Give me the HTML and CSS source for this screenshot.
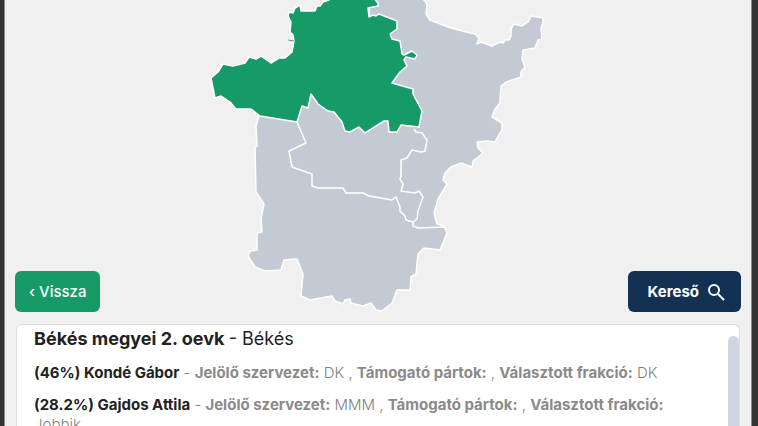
FILE: index.html
```
<!DOCTYPE html>
<html lang="hu">
<head>
    <meta charset="UTF-8">
    <meta name="viewport" content="width=device-width, initial-scale=1.0">
    <link rel="stylesheet" href="styles.css">
    <title>Békés megye</title>
</head>
<body>
    <main class="page">
        <section class="stage">
            <button type="button" class="btn btn-back">‹ Vissza</button>

            <svg class="map" viewBox="203 0 350 312" role="img" aria-label="Békés megye választókerületei">
                <path class="district" d="M420 -5L427 4L426 14L430 20L448 27L462 31L475 34L479 38L477 44L481 42L492 46L500 42L503 43L505 40L509 40L511 36L511 29L514 24L522 26L528 22L531 16L543 18L543 23L541 28L542 39L538 40L535 48L523 50L522 59L525 67L521 72L521 77L506 82L501 86L500 103L495 109L492 117L502 123L502 130L495 142L487 141L477 142L478 148L483 153L473 161L472 167L461 163L451 167L445 173L443 180L447 184L438 199L434 213L437 224L444 226L447 233L440 250L424 248L418 254L416 274L411 277L410 290L397 290L392 303L382 311L376 310L371 303L363 306L351 303L350 299L345 300L343 304L335 301L332 296L310 300L301 296L303 274L297 259L284 260L281 270L265 271L255 267L248 256L250 251L257 250L257 233L262 232L261 218L264 204L256 192L255 147L257 146L256 126L259 116L300 90L370 30L368 -8Z"/>
                <path class="border" d="M297 122L306 143L289 151L292 167L312 174L312 186L318 188L343 188L346 193L363 193L369 196L392 200L396 197L400 207L400 211L405 216L406 220L413 222L413 226L418 228L445 227"/>
                <path class="border" d="M414 129L416 132L422 133L427 140L425 151L421 152L412 150L407 158L401 160L401 176L400 179L403 184L401 191L415 193L419 191L423 197L418 211L417 219L413 222"/>
                <path class="district active" d="M371 -5L378 3L378 6L368 8L369 17L373 15L376 16L379 14L397 21L397 29L390 34L392 39L400 41L402 54L404 55L412 51L417 55L415 59L406 57L404 60L407 66L400 72L392 83L413 89L413 94L422 111L419 127L401 125L397 132L389 132L388 121L384 121L365 133L359 127L350 132L345 131L342 122L334 112L328 111L318 104L311 94L308 108L302 106L297 122L260 116L251 109L236 109L230 102L221 96L215 98L211 78L218 72L223 64L233 66L245 63L249 57L256 59L261 56L271 63L279 58L285 58L292 52L294 41L293 35L290 32L291 22L288 16L289 12L293 13L295 8L300 5L301 11L315 11L317 6L320 6L323 2L329 0L332 -5Z"/>
                <path class="stream" d="M288 40L294 41"/>
            </svg>

            <button type="button" class="btn btn-search">
                Kereső
                <svg class="icon" viewBox="0 0 18 18" aria-hidden="true">
                    <circle cx="7" cy="7" r="5"/>
                    <path d="M11 11L17 17"/>
                </svg>
            </button>
        </section>

        <section class="panel">
            <div class="results">
                <h1 class="title">Békés megyei 2. oevk <span>- Békés</span></h1>
                <p class="candidate"><strong class="name">(46%) Kondé Gábor</strong> - <b>Jelölő szervezet:</b> DK , <b>Támogató pártok:</b> , <b>Választott frakció:</b> DK</p>
                <p class="candidate"><strong class="name">(28.2%) Gajdos Attila</strong> - <b>Jelölő szervezet:</b> MMM , <b>Támogató pártok:</b> , <b>Választott frakció:</b> Jobbik</p>
            </div>
            <div class="scroll-thumb"></div>
        </section>
    </main>
</body>
</html>
```
FILE: styles.css
```
* {
    box-sizing: border-box;
}

body {
    margin: 0;
    padding: 0 6px 0 4px;
    height: 100vh;
    overflow: hidden;
    background-color: #333;
    font-family: Inter, "Liberation Sans", sans-serif;
}

.page {
    display: flex;
    flex-direction: column;
    gap: 12px;
    height: 100%;
    overflow: hidden;
    background-color: #f0f0f0;
    border-left: 1px solid #888;
    border-right: 1px solid #888;
}

.stage {
    display: grid;
    grid-template-columns: 1fr minmax(0, 350px) 1fr;
    align-items: end;
    padding: 0 10px;
}

.map {
    display: block;
    width: 100%;
}

.district {
    fill: #c4cad3;
    stroke: #fff;
    stroke-width: 1.5;
    stroke-linejoin: round;
}

.border {
    fill: none;
    stroke: #fff;
    stroke-width: 1.5;
    stroke-linejoin: round;
}

.active {
    fill: #159a68;
}

.stream {
    stroke: #4f9f80;
}

.btn {
    display: flex;
    align-items: center;
    gap: 8px;
    height: 41px;
    border: none;
    border-radius: 6px;
    color: white;
    font-family: inherit;
    font-size: 15px;
    cursor: pointer;
}

.btn-back {
    justify-self: start;
    padding: 0 14px;
    background-color: #159a68;
    font-weight: 500;
}

.btn-search {
    justify-self: end;
    padding: 0 16px 0 20px;
    background-color: #133253;
    font-weight: 700;
}

.icon {
    width: 18px;
    height: 18px;
    fill: none;
    stroke: white;
    stroke-width: 2;
}

.panel {
    display: flex;
    flex: 1 0 auto;
    margin: 0 11px;
    background-color: white;
    border: 1px solid #ddd;
    border-bottom: none;
    border-radius: 6px 6px 0 0;
}

.results {
    flex: 1;
    padding: 0 24px 0 17px;
}

.title {
    margin: 0 0 10px;
    font-size: 18px;
    font-weight: 700;
    line-height: 28px;
    color: #222;
}

.title span {
    font-weight: 400;
}

.candidate {
    margin: 0 0 12px;
    font-size: 15px;
    font-weight: 300;
    line-height: 20px;
    color: #808080;
}

.candidate b {
    font-weight: 700;
    color: #8a8a8a;
}

.candidate .name {
    color: #222;
    font-weight: 700;
}

.scroll-thumb {
    width: 11px;
    margin-top: 11px;
    background-color: #d0d5e0;
    border-radius: 6px 6px 0 0;
}
```
